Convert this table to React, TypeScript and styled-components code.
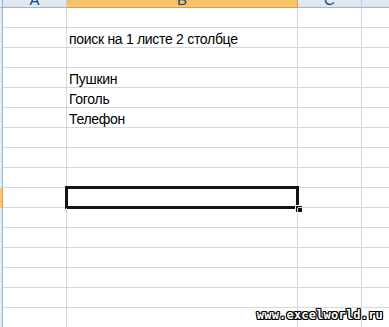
import styled, { createGlobalStyle } from "styled-components";

const GlobalStyle = createGlobalStyle`
  html, body {
    margin: 0;
    padding: 0;
    background: #ffffff;
    overflow: hidden;
  }
  body {
    font-family: "Liberation Sans", Arial, sans-serif;
  }
`;

const columns = [
  { name: "A", width: 64 },
  { name: "B", width: 231 },
  { name: "C", width: 64 },
  { name: "D", width: 80 },
];

const rows: string[] = [
  "",
  "поиск на 1 листе 2 столбце",
  "",
  "Пушкин",
  "Гоголь",
  "Телефон",
  "",
  "",
  "",
  "",
  "",
  "",
  "",
  "",
  "",
  "",
];

const activeRow = 9;
const activeCol = 1;

export default function App() {
  return (
    <>
      <GlobalStyle />
      <Viewport>
        <Sheet>
          <HeaderRow>
            <Corner />
            {columns.map((c, i) => (
              <ColHeader key={c.name} $w={c.width} $active={i === activeCol}>
                {c.name}
              </ColHeader>
            ))}
          </HeaderRow>
          {rows.map((text, r) => (
            <Row key={r}>
              <RowHeader $active={r === activeRow} />
              {columns.map((c, i) => (
                <Cell key={c.name} $w={c.width}>
                  {i === 1 ? text : ""}
                  {r === activeRow && i === activeCol && (
                    <Selection>
                      <FillHandle />
                    </Selection>
                  )}
                </Cell>
              ))}
            </Row>
          ))}
        </Sheet>
        <Watermark>www.excelworld.ru</Watermark>
      </Viewport>
    </>
  );
}

const Viewport = styled.div`
  position: relative;
  width: 389px;
  height: 327px;
  overflow: hidden;
`;

/* sheet is scrolled a little, so the column header is only partly visible */
const Sheet = styled.div`
  display: flex;
  flex-direction: column;
  margin-top: -12px;
`;

const HeaderRow = styled.div`
  display: flex;
  height: 20px;
`;

const Corner = styled.div`
  width: 3px;
  flex: none;
  box-sizing: border-box;
  background: #e4ecf7;
  border-right: 1px solid #9eb6ce;
  border-bottom: 1px solid #9eb6ce;
`;

const ColHeader = styled.div<{ $w: number; $active?: boolean }>`
  width: ${(p) => p.$w}px;
  flex: none;
  box-sizing: border-box;
  height: 20px;
  border-right: 1px solid ${(p) => (p.$active ? "#f29536" : "#c5d1e0")};
  border-bottom: 1px solid ${(p) => (p.$active ? "#f29536" : "#9eb6ce")};
  background: ${(p) =>
    p.$active
      ? "linear-gradient(#f9d99f, #f1c15f 60%, #f6c674)"
      : "linear-gradient(#f9fcfd, #e4eaf3 60%, #dde4ee)"};
  color: #15428b;
  font-size: 15px;
  line-height: 24px;
  text-align: center;
`;

const Row = styled.div`
  display: flex;
  height: 20px;
`;

const RowHeader = styled.div<{ $active?: boolean }>`
  width: 3px;
  flex: none;
  box-sizing: border-box;
  background: ${(p) => (p.$active ? "#f8c777" : "#e4ecf7")};
  border-right: 1px solid ${(p) => (p.$active ? "#f29536" : "#9eb6ce")};
`;

const Cell = styled.div<{ $w: number }>`
  position: relative;
  width: ${(p) => p.$w}px;
  flex: none;
  box-sizing: border-box;
  height: 20px;
  border-right: 1px solid #d0d7e5;
  border-bottom: 1px solid #d0d7e5;
  padding-left: 2px;
  font-size: 14px;
  letter-spacing: -0.3px;
  line-height: 22px;
  color: #000;
  white-space: nowrap;
`;

const Selection = styled.div`
  position: absolute;
  left: -2px;
  top: -2px;
  width: 228px;
  height: 17px;
  border: 3px solid #161410;
  pointer-events: none;
`;

const FillHandle = styled.div`
  position: absolute;
  right: -7px;
  bottom: -7px;
  width: 6px;
  height: 6px;
  background: #161410;
  border: 1px solid #ffffff;
`;

const Watermark = styled.div`
  position: absolute;
  right: 6px;
  bottom: 5px;
  font-family: "DejaVu Sans Mono", monospace;
  font-weight: bold;
  font-size: 12px;
  letter-spacing: 0.2px;
  color: #ffffff;
  text-shadow: 1px 0 0 #000, -1px 0 0 #000, 0 1px 0 #000, 0 -1px 0 #000,
    1px 1px 0 #000, -1px -1px 0 #000, 1px -1px 0 #000, -1px 1px 0 #000;
`;
